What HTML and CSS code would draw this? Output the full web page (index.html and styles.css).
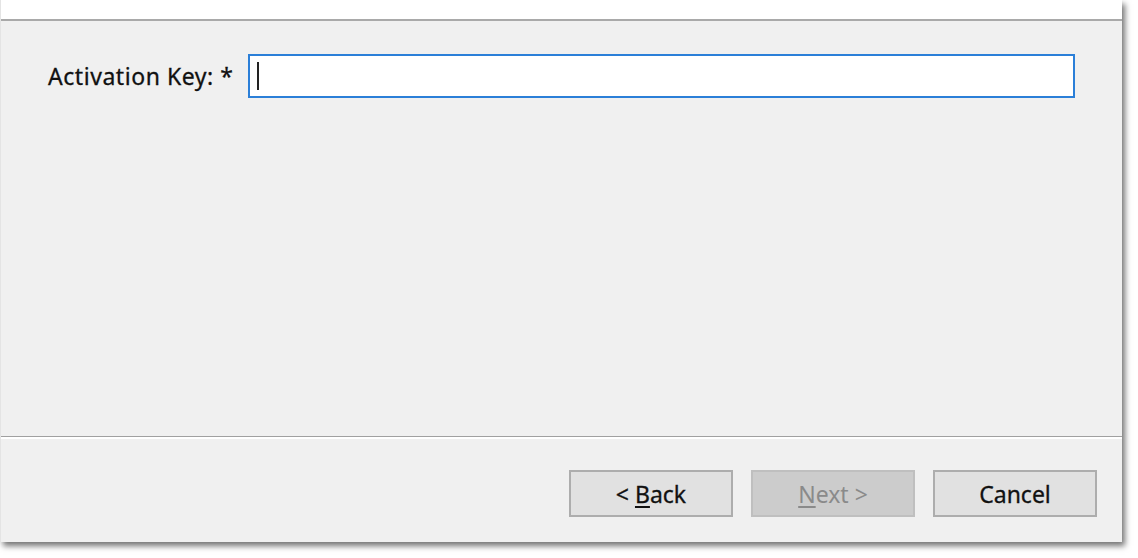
FILE: index.html
```html
<!DOCTYPE html>
<html>
<head>
<meta charset="utf-8">
<link rel="stylesheet" href="styles.css">
</head>
<body>
<div class="window">
  <div class="header"></div>
  <div class="content">
    <div class="field-row">
      <label class="field-label">Activation Key: *</label>
      <div class="input"><span class="caret"></span></div>
    </div>
  </div>
  <div class="separator"></div>
  <div class="footer">
    <button class="btn">&lt; <u>B</u>ack</button>
    <button class="btn btn-disabled"><u>N</u>ext &gt;</button>
    <button class="btn btn-cancel">Cancel</button>
  </div>
</div>
</body>
</html>
```
FILE: styles.css
```css
html, body {
  margin: 0;
  padding: 0;
  background: #ffffff;
}
body {
  width: 1138px;
  height: 558px;
  overflow: hidden;
  font-family: "Noto Sans", "Open Sans", sans-serif;
}
.window {
  width: 1121px;
  height: 542px;
  background: #f0f0f0;
  border-left: 1px solid #e4e4e4;
  box-shadow: 3px 4px 6px rgba(0, 0, 0, 0.55);
  display: flex;
  flex-direction: column;
}
.header {
  height: 19px;
  background: #ffffff;
  border-bottom: 2px solid #a9a9a9;
}
.content {
  flex: 1;
  padding: 33px 47px 0 47px;
}
.field-row {
  display: flex;
  align-items: center;
  gap: 14px;
}
.field-label {
  font-size: 23px;
  letter-spacing: 0.55px;
  color: #111;
  -webkit-text-stroke: 0.3px #111;
}
.input {
  flex: 1;
  height: 40px;
  background: #ffffff;
  border: 2px solid #2b7fd8;
  display: flex;
  align-items: center;
  padding-left: 7px;
}
.caret {
  width: 2px;
  height: 28px;
  background: #222;
}
.separator {
  height: 1px;
  background: #a0a0a0;
  border-bottom: 2px solid #ffffff;
}
.footer {
  height: 103px;
  display: flex;
  justify-content: flex-end;
  align-items: flex-start;
  padding: 31px 25px 0 0;
  gap: 18px;
  box-sizing: border-box;
}
.btn {
  width: 164px;
  height: 47px;
  background: #e1e1e1;
  border: 2px solid #adadad;
  font-family: "Noto Sans", "Open Sans", sans-serif;
  font-size: 23px;
  color: #111;
  -webkit-text-stroke: 0.3px #111;
  padding: 0;
}
.btn u {
  text-underline-offset: 3px;
}
.btn-disabled {
  background: #cccccc;
  border-color: #bfbfbf;
  color: #8a8a8a;
  -webkit-text-stroke: 0;
}
```
